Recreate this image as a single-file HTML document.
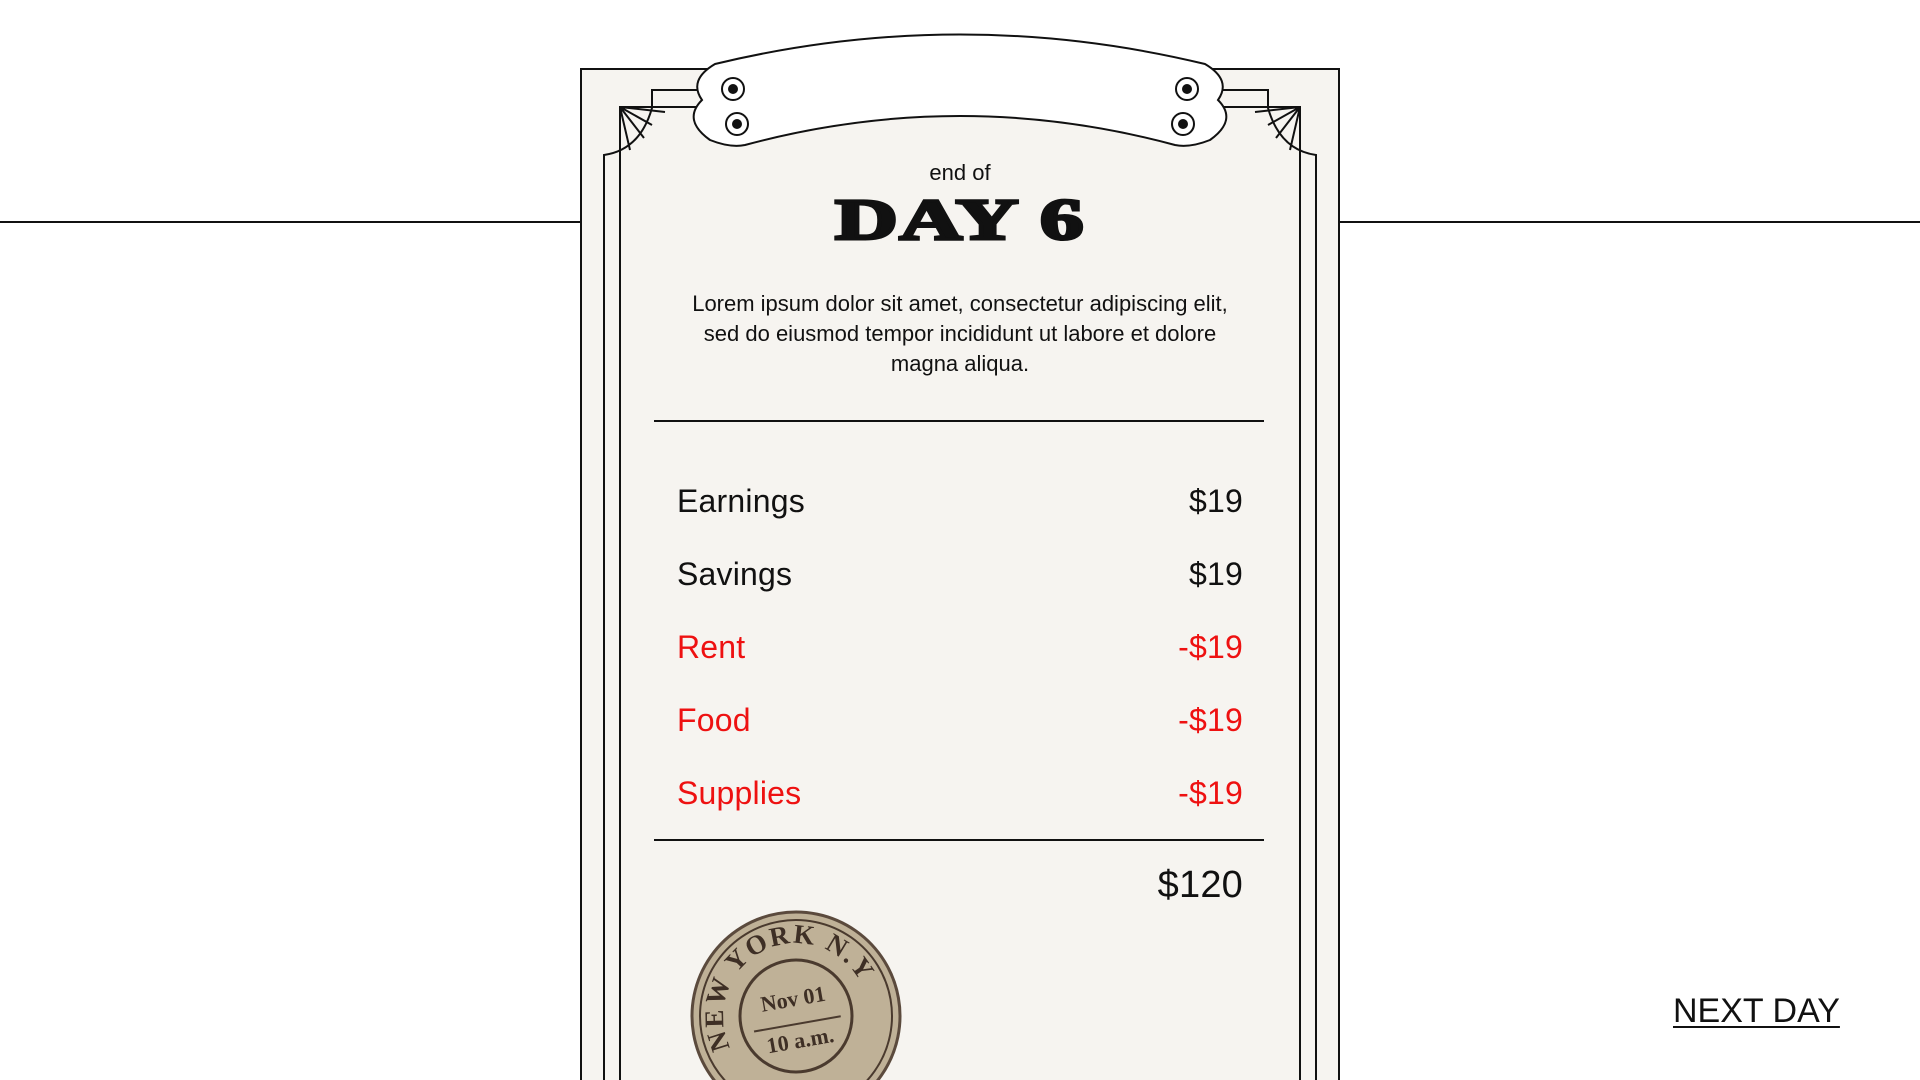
<!DOCTYPE html>
<html><head><meta charset="utf-8"><style>
html,body{margin:0;padding:0;width:1920px;height:1080px;overflow:hidden;background:#fff;font-family:"Liberation Sans",sans-serif;}
.hl{position:absolute;top:221px;height:2px;background:#111;}
.card{position:absolute;left:580px;top:68px;width:760px;height:1012px;background:#f6f4f0;}
svg{position:absolute;left:0;top:0;overflow:hidden;}
.t{position:absolute;left:0;width:1920px;text-align:center;color:#111;}
.row{position:absolute;left:677px;width:566px;font-size:32px;display:flex;justify-content:space-between;color:#111;letter-spacing:0.2px;}
.red{color:#ee1111;}
.rule{position:absolute;left:654px;width:610px;height:2px;background:#111;}
.nd{position:absolute;left:1673px;top:992px;font-size:34px;color:#111;text-decoration:underline;text-decoration-thickness:2px;text-underline-offset:4px;}
</style></head><body>
<div class="hl" style="left:0;width:580px"></div>
<div class="hl" style="left:1340px;width:580px"></div>
<div class="card"></div>
<svg width="1920" height="1080" viewBox="0 0 1920 1080" fill="none" stroke="#111" stroke-width="2">
<path d="M581 1080 V69 H1339 V1080"/>
<g>
<path d="M604 1080 V155 Q640 150 652 108 V90 H705"/>
<path d="M620 1080 V107 H700"/>
<path d="M620 107 L652 125 M620 107 L644 138 M620 107 L630 150 M620 107 L665 112"/>
</g>
<g transform="translate(1920,0) scale(-1,1)">
<path d="M604 1080 V155 Q640 150 652 108 V90 H705"/>
<path d="M620 1080 V107 H700"/>
<path d="M620 107 L652 125 M620 107 L644 138 M620 107 L630 150 M620 107 L665 112"/>
</g>
<path d="M715 64 Q960 5 1205 64 Q1232 80 1218 100 Q1238 120 1210 140 Q1190 148 1175 145 Q960 87 745 145 Q730 148 710 140 Q682 120 702 100 Q688 80 715 64Z" fill="#fff"/>
<g>
<circle cx="733" cy="89" r="11"/><circle cx="737" cy="124" r="11"/>
<circle cx="1187" cy="89" r="11"/><circle cx="1183" cy="124" r="11"/>
</g>
<g fill="#111" stroke="none">
<circle cx="733" cy="89" r="5"/><circle cx="737" cy="124" r="5"/>
<circle cx="1187" cy="89" r="5"/><circle cx="1183" cy="124" r="5"/>
</g>
<g transform="translate(796,1016) rotate(-10)">
<circle r="104" fill="#bfb197" stroke="#5b4a3d" stroke-width="3"/>
<circle r="96" stroke="#4a3a2e" stroke-width="2"/>
<circle r="56" stroke="#4a3a2e" stroke-width="3"/>
<line x1="-44" y1="8" x2="44" y2="8" stroke="#4a3a2e" stroke-width="2"/>
<text x="0" y="-10" text-anchor="middle" font-family="Liberation Serif" font-size="22" fill="#3e2f25" stroke="none" font-weight="bold">Nov 01</text>
<text x="0" y="32" text-anchor="middle" font-family="Liberation Serif" font-size="22" fill="#3e2f25" stroke="none" font-weight="bold">10 a.m.</text>
<path id="arc" d="M-70 20 A72 72 0 0 1 70 -20" stroke="none"/>
<text font-family="Liberation Serif" font-size="27" font-weight="bold" fill="#3e2f25" stroke="none" letter-spacing="2"><textPath href="#arc">NEW YORK N.Y</textPath></text>
</g>
</svg>
<div class="t" style="top:160px;font-size:22px">end of</div>
<div class="t" style="top:186px;font-size:58px;font-family:'Liberation Serif',serif;font-weight:900;letter-spacing:1px;-webkit-text-stroke:3px #111;transform:scaleX(1.5)">DAY 6</div>
<div class="t" style="top:289px;font-size:22px;line-height:30px;left:685px;width:550px">Lorem ipsum dolor sit amet, consectetur adipiscing elit, sed do eiusmod tempor incididunt ut labore et dolore magna aliqua.</div>
<div class="rule" style="top:420px"></div>
<div class="row" style="top:483px"><span>Earnings</span><span>$19</span></div>
<div class="row" style="top:556px"><span>Savings</span><span>$19</span></div>
<div class="row red" style="top:629px"><span>Rent</span><span>-$19</span></div>
<div class="row red" style="top:702px"><span>Food</span><span>-$19</span></div>
<div class="row red" style="top:775px"><span>Supplies</span><span>-$19</span></div>
<div class="rule" style="top:839px"></div>
<div class="row" style="top:864px;font-size:38px;justify-content:flex-end"><span>$120</span></div>
<div class="nd">NEXT DAY</div>
</body></html>
